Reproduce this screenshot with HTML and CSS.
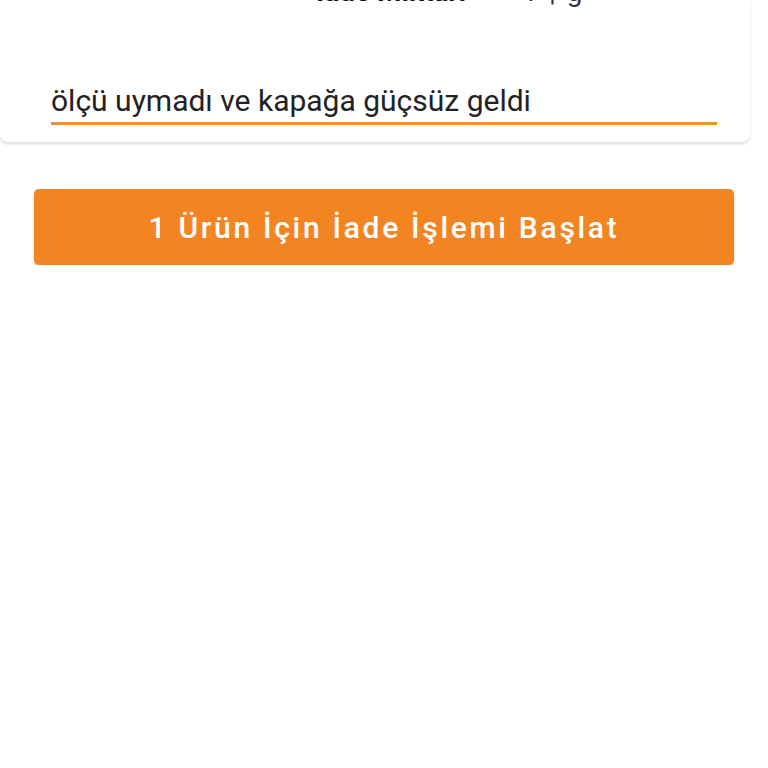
FILE: index.html
```html
<!DOCTYPE html>
<html lang="tr">
<head>
<meta charset="utf-8">
<link rel="stylesheet" href="styles.css">
</head>
<body>
<div class="card">
  <div class="qty-row">
    <span class="qty-label">İade Miktarı</span>
    <span class="qty-value">1 <span class="qty-sep">|</span> g</span>
  </div>
  <div class="field">
    <div class="field-text">ölçü uymadı ve kapağa güçsüz geldi</div>
  </div>
</div>
<div class="actions">
  <button class="primary">1 Ürün İçin İade İşlemi Başlat</button>
</div>
</body>
</html>
```
FILE: styles.css
```css
html, body {
  margin: 0;
  padding: 0;
  background: #ffffff;
  font-family: Roboto, "Noto Sans", sans-serif;
}
.card {
  width: 750px;
  background: #ffffff;
  border-radius: 0 0 8px 8px;
  box-shadow: 0 2px 3px rgba(0,0,0,0.14);
  padding: 0 0 17px 0;
}
.qty-row {
  display: flex;
  height: 13px;
  align-items: flex-end;
  padding-left: 316px;
  gap: 56px;
  font-size: 28px;
  color: #111;
}
.qty-label {
  font-weight: 700;
  line-height: 43px;
}
.qty-value {
  font-weight: 400;
  line-height: 43px;
  color: #333;
}
.qty-sep {
  margin: 0 4px;
}
.field {
  margin: 71px 0 0 51px;
  width: 666px;
  border-bottom: 3px solid #e8903a;
  padding-bottom: 4px;
}
.field-text {
  font-size: 30px;
  line-height: 34px;
  color: #222;
}
.actions {
  padding: 47px 34px 0 34px;
}
.primary {
  display: block;
  width: 700px;
  height: 76px;
  border: 0;
  border-radius: 5px;
  background: #f38422;
  color: #ffffff;
  font-family: Roboto, "Noto Sans", sans-serif;
  font-weight: 500;
  font-size: 30px;
  letter-spacing: 2.7px;
  box-shadow: 0 2px 3px rgba(0,0,0,0.2);
}
```
